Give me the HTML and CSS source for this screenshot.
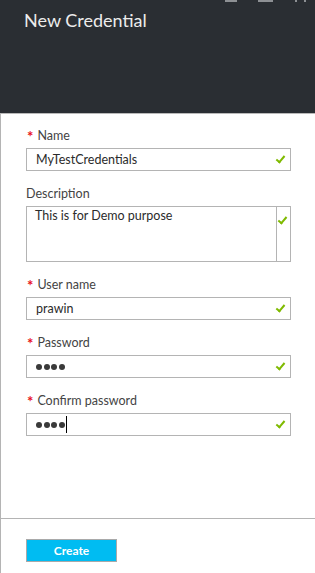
FILE: index.html
```html
<!DOCTYPE html>
<html lang="en">
  <head>
    <meta charset="UTF-8" />
    <meta name="viewport" content="width=device-width, initial-scale=1.0" />
    <title>New Credential</title>
    <link rel="stylesheet" href="styles.css">
  </head>
  <body>
    <div class="blade">
      <div class="header">
        <div class="windowButtons">
          <span class="minimize"></span>
          <span class="maximize"></span>
          <span class="close"><i></i><i></i></span>
        </div>
        <div class="title">New Credential</div>
      </div>

      <div class="form">
        <div class="field">
          <div class="label"><span class="star">*</span>Name</div>
          <div class="input">
            <span class="value">MyTestCredentials</span>
            <span class="check"></span>
          </div>
        </div>

        <div class="field">
          <div class="label">Description</div>
          <div class="textarea">
            <span class="value">This is for Demo purpose</span>
            <span class="scrollColumn"><span class="check"></span></span>
          </div>
        </div>

        <div class="field">
          <div class="label"><span class="star">*</span>User name</div>
          <div class="input">
            <span class="value">prawin</span>
            <span class="check"></span>
          </div>
        </div>

        <div class="field">
          <div class="label"><span class="star">*</span>Password</div>
          <div class="input">
            <span class="dots"><i></i><i></i><i></i><i></i></span>
            <span class="check"></span>
          </div>
        </div>

        <div class="field">
          <div class="label"><span class="star">*</span>Confirm password</div>
          <div class="input">
            <span class="dots caret"><i></i><i></i><i></i><i></i></span>
            <span class="check"></span>
          </div>
        </div>
      </div>

      <div class="footer">
        <button class="createButton">Create</button>
      </div>
    </div>
  </body>
</html>
```

FILE: styles.css
```css
* {
  box-sizing: border-box;
}

body {
  margin: 0;
  font-family: "Segoe UI", Lato, "Open Sans", sans-serif;
  background-color: #fff;
}

.blade {
  height: 100vh;
  display: flex;
  flex-direction: column;
}

.header {
  height: 114px;
  background-color: #2a2e33;
  border-bottom: 1px solid #b9b9b9;
  flex-shrink: 0;
}

.windowButtons {
  height: 3px;
  display: flex;
  justify-content: flex-end;
  align-items: flex-start;
  padding-right: 9px;
}

.minimize {
  width: 12px;
  height: 2px;
  background-color: #8d9094;
  margin-right: 21px;
}

.maximize {
  width: 15px;
  height: 2px;
  background-color: #8d9094;
  margin-right: 22px;
}

.close {
  width: 11px;
  display: flex;
  justify-content: space-between;
}

.close i {
  width: 2px;
  height: 2px;
  background-color: #8d9094;
}

.title {
  color: #ececec;
  font-size: 18px;
  line-height: 24px;
  padding: 5px 0 0 24px;
}

.form {
  flex: 1;
  border-left: 1px solid #b4b4b4;
  padding: 13px 24px 0 25px;
}

.field {
  margin-bottom: 14px;
}

.label {
  height: 18px;
  color: #444;
  font-size: 12.5px;
  line-height: 18px;
  margin-bottom: 3px;
  display: flex;
  align-items: center;
}

.star {
  color: #e81123;
  font-size: 15px;
  font-weight: 700;
  line-height: 12px;
  height: 12px;
  margin: 0 4px 0 1px;
  align-self: flex-start;
  padding-top: 3px;
}

.input {
  height: 23px;
  border: 1px solid #b4b4b4;
  display: flex;
  align-items: center;
  justify-content: space-between;
  padding: 0 4px 0 9px;
}

.value {
  color: #2b2b2b;
  font-size: 12.5px;
}

.dots {
  display: flex;
  align-items: center;
  gap: 1.5px;
  height: 17px;
}

.dots i {
  width: 6px;
  height: 6px;
  border-radius: 50%;
  background-color: #3a3a3a;
}

.caret {
  border-right: 1px solid #000;
  padding-right: 1px;
}

.textarea {
  height: 56px;
  border: 1px solid #b4b4b4;
  display: flex;
  justify-content: space-between;
}

.textarea .value {
  padding: 1px 0 0 8px;
}

.scrollColumn {
  width: 14px;
  border-left: 1px solid #b4b4b4;
  display: flex;
  justify-content: center;
  padding-top: 8px;
}

.check {
  width: 5px;
  height: 9px;
  border-right: 2px solid #7fba00;
  border-bottom: 2px solid #7fba00;
  transform: rotate(40deg);
  margin: 0 3px 3px 0;
}

.footer {
  height: 55px;
  flex-shrink: 0;
  border-top: 1px solid #b4b4b4;
  border-left: 1px solid #b4b4b4;
  padding: 20px 0 0 25px;
}

.createButton {
  width: 91px;
  height: 23px;
  background-color: #00bcf2;
  border: 1px solid #a9a9a9;
  color: #fff;
  font-family: inherit;
  font-size: 12px;
  font-weight: 700;
  padding: 0;
  cursor: pointer;
}
```
